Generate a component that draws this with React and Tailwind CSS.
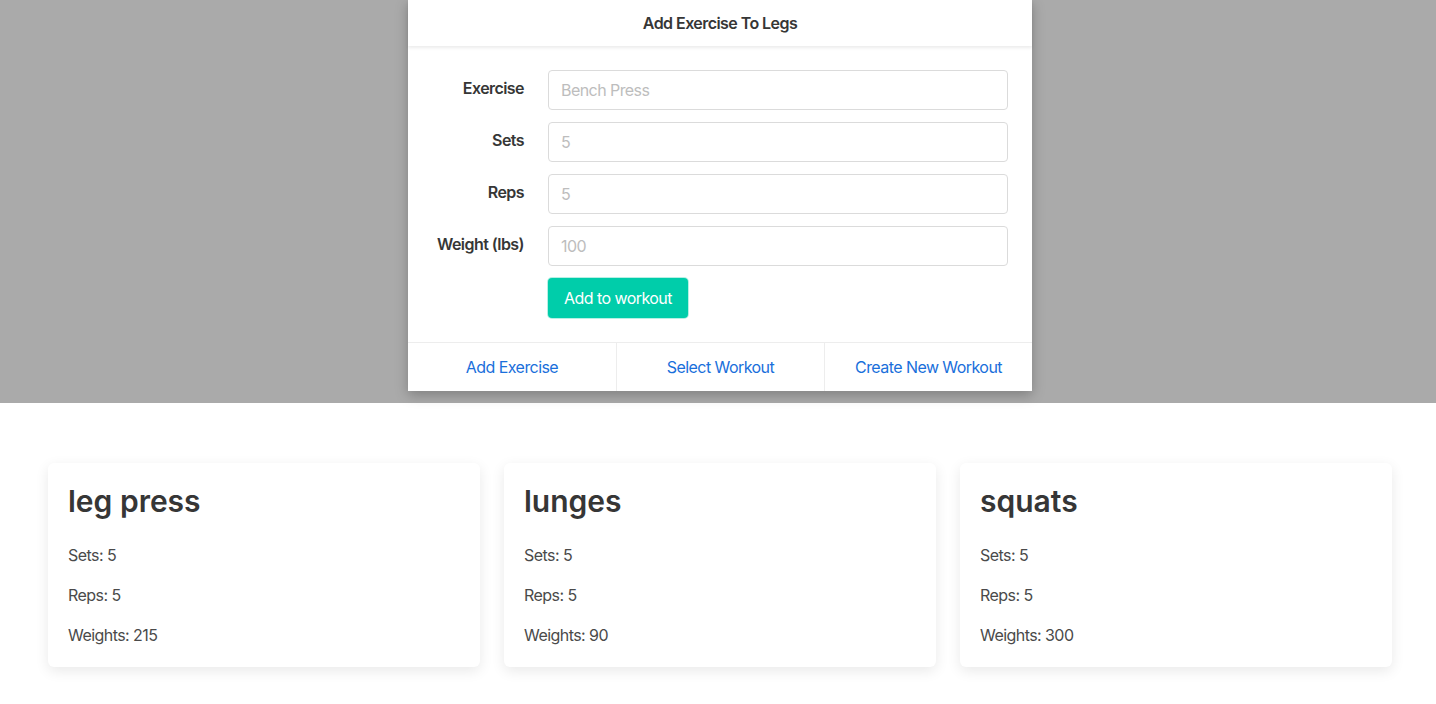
import React from 'react';

const fields = [
  { label: 'Exercise', placeholder: 'Bench Press' },
  { label: 'Sets', placeholder: '5' },
  { label: 'Reps', placeholder: '5' },
  { label: 'Weight (lbs)', placeholder: '100' },
];

const exercises = [
  { name: 'leg press', sets: 5, reps: 5, weight: 215 },
  { name: 'lunges', sets: 5, reps: 5, weight: 90 },
  { name: 'squats', sets: 5, reps: 5, weight: 300 },
];

const App = () => {
  return (
    <div className="min-h-screen bg-white text-[#363636] font-['Inter','Liberation_Sans',sans-serif] tracking-[-0.035em]">
      {/* modal area */}
      <section className="bg-[#aaaaaa] flex justify-center pl-1 pb-3">
        <div className="w-[624px] bg-white shadow-[0_4px_12px_rgba(0,0,0,0.25)]">
          <header className="h-[46px] flex items-center justify-center font-semibold text-base shadow-[0_2px_3px_rgba(0,0,0,0.08)] relative">
            Add Exercise To Legs
          </header>
          <div className="px-6 pt-6 pb-6 flex flex-col gap-3">
            {fields.map((f) => (
              <div key={f.label} className="flex gap-6">
                <label className="w-[92px] whitespace-nowrap text-right font-semibold text-base leading-6 pt-1.5">
                  {f.label}
                </label>
                <input
                  className="flex-1 h-10 border border-[#dbdbdb] rounded px-3 text-base tracking-[-0.035em] placeholder:text-[#bdbdbd] outline-none"
                  placeholder={f.placeholder}
                />
              </div>
            ))}
            <div className="flex gap-6">
              <div className="w-[92px]" />
              <button className="h-10 w-[140px] rounded bg-[#00cdaa] text-white text-base tracking-[-0.035em] ring-1 ring-[#b6f0e4]">
                Add to workout
              </button>
            </div>
          </div>
          <footer className="grid grid-cols-3 border-t border-[#ededed] h-[49px]">
            <a className="flex items-center justify-center text-[#1a6fdb] text-base">Add Exercise</a>
            <a className="flex items-center justify-center text-[#1a6fdb] text-base border-l border-[#ededed]">Select Workout</a>
            <a className="flex items-center justify-center text-[#1a6fdb] text-base border-l border-[#ededed]">Create New Workout</a>
          </footer>
        </div>
      </section>

      {/* exercise cards */}
      <div className="grid grid-cols-[repeat(3,432px)] gap-6 px-12 pt-[60px]">
        {exercises.map((e) => (
          <div key={e.name} className="bg-white rounded-md shadow-[0_4px_14px_rgba(0,0,0,0.09)] p-5">
            <h2 className="text-3xl font-semibold leading-9 tracking-normal text-[#363636]">{e.name}</h2>
            <div className="mt-6 flex flex-col gap-4 text-base leading-6 text-[#4a4a4a]">
              <p>Sets: {e.sets}</p>
              <p>Reps: {e.reps}</p>
              <p>Weights: {e.weight}</p>
            </div>
          </div>
        ))}
      </div>
    </div>
  );
};

export default App;
